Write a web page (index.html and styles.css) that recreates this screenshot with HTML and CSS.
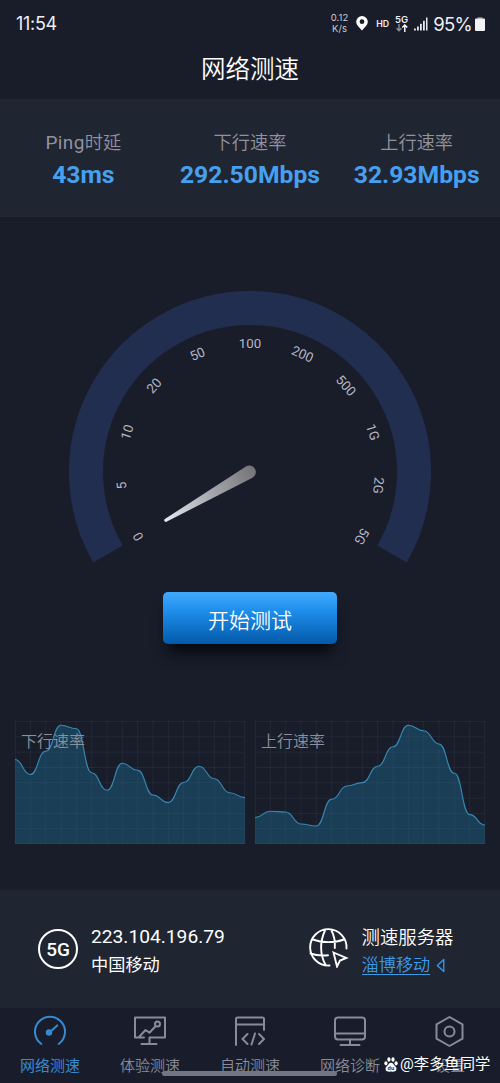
FILE: index.html
```html
<!DOCTYPE html>
<html lang="zh-CN">
<head>
<meta charset="utf-8">
<title>网络测速</title>
<link rel="stylesheet" href="styles.css">
</head>
<body>
<div class="app">
  <div class="statusbar">
    <span class="clock">11:54</span>
    <div class="status-right">
      <span class="rate">0.12<br>K/s</span>
      <svg class="pin" width="12" height="15" viewBox="0 0 12 15"><path fill="#fff" fill-rule="evenodd" d="M6 0a5.8 5.8 0 0 1 5.8 5.8C11.800 9 8.500 11.500 6 14.600 3.500 11.500.2 9 .2 5.800A5.800 5.800 0 0 1 6 0zm0 3.300a2.400 2.400 0 1 0 0 4.800 2.400 2.400 0 0 0 0-4.800z"/></svg>
      <span class="hd">HD</span>
      <span class="net"><span>5G</span><svg width="12" height="8" viewBox="0 0 12 8" fill="none" stroke-width="1.400"><path stroke="#8b8e98" d="M3 0v6.500M.6 4.200 3 6.800l2.400-2.600"/><path stroke="#fff" d="M8.800 8V1.200M6.300 3.600l2.500-2.600 2.500 2.600"/></svg></span>
      <svg class="signal" width="14" height="14" viewBox="0 0 14 14" fill="#e8e9ee"><rect x="0" y="11.500" width="1.800" height="2"/><rect x="3" y="9.500" width="1.800" height="4"/><rect x="6" y="6.800" width="1.800" height="6.700"/><rect x="9" y="3.800" width="1.800" height="9.700"/><rect x="12" y="0.500" width="1.500" height="13"/></svg>
      <span class="percent">95%</span>
      <svg class="battery" width="10" height="14" viewBox="0 0 10 14"><rect x="2.500" y="0" width="5" height="2" fill="#777b86"/><rect x="0" y="1.500" width="10" height="12.500" rx="1" fill="#f1f2f5"/></svg>
    </div>
  </div>
  <header class="title">网络测速</header>
  <section class="stats">
    <div class="stat"><span class="stat-label"><span class="latin">Ping</span>时延</span><span class="stat-value">43ms</span></div>
    <div class="stat"><span class="stat-label">下行速率</span><span class="stat-value">292.50Mbps</span></div>
    <div class="stat"><span class="stat-label">上行速率</span><span class="stat-value">32.93Mbps</span></div>
  </section>
  <section class="dial">
    <svg class="gauge" width="364" height="280" viewBox="-182 -182 364 280">
      <defs><linearGradient id="needle" x1="0" y1="0" x2="0" y2="1"><stop offset="0" stop-color="#e6e8f2"/><stop offset=".5" stop-color="#a8a9af"/><stop offset="1" stop-color="#747477"/></linearGradient></defs>
      <path class="arc" d="M-142.030 82A164 164 0 1 1 142.030 82"/>
      <g class="ticks">
        <text transform="rotate(-120) translate(0 -124.500)">0</text>
        <text transform="rotate(-96) translate(0 -124.500)">5</text>
        <text transform="rotate(-72) translate(0 -124.500)">10</text>
        <text transform="rotate(-48) translate(0 -124.500)">20</text>
        <text transform="rotate(-24) translate(0 -124.500)">50</text>
        <text transform="translate(0 -124.500)">100</text>
        <text transform="rotate(24) translate(0 -124.500)">200</text>
        <text transform="rotate(48) translate(0 -124.500)">500</text>
        <text transform="rotate(72) translate(0 -124.500)">1G</text>
        <text transform="rotate(96) translate(0 -124.500)">2G</text>
        <text transform="rotate(120) translate(0 -124.500)">5G</text>
      </g>
      <path transform="translate(.5 -.6) rotate(-120)" fill="url(#needle)" d="M-1.500-98.500Q0-100 1.500-98.500L6.600-1.500A6.600 6.600 0 1 1-6.600-1.500z"/>
    </svg>
    <button class="start">开始测试</button>
  </section>
  <section class="charts">
    <div class="chart">
      <svg width="230" height="123" viewBox="0 0 240 123" preserveAspectRatio="none">
        <path class="area" d="M0 38.500C8 38.500 8 53.500 16 53.500S24 30.300 32 30.300 40 4.300 48 4.300 56 7.700 64 7.700 72 51.700 80 51.700 88 69.300 96 69.300 104 42.300 112 42.300 120 49.300 128 49.300 136 74 144 74 152 81.600 160 81.600 168 61.500 176 61.500 184 45.300 192 45.300 200 57.700 208 57.700 216 71.700 224 71.700 232 76.600 240 76.600V123H0z"/>
        <path class="line" d="M0 38.500C8 38.500 8 53.500 16 53.500S24 30.300 32 30.300 40 4.300 48 4.300 56 7.700 64 7.700 72 51.700 80 51.700 88 69.300 96 69.300 104 42.300 112 42.300 120 49.300 128 49.300 136 74 144 74 152 81.600 160 81.600 168 61.500 176 61.500 184 45.300 192 45.300 200 57.700 208 57.700 216 71.700 224 71.700 232 76.600 240 76.600"/>
        <path class="grid" d="M0 .5H240M0 15.800H240M0 31.200H240M0 46.500H240M0 61.800H240M0 77.200H240M0 92.500H240M0 107.800H240M0 122.500H240M.5 0V123M16 0V123M32 0V123M48 0V123M64 0V123M80 0V123M96 0V123M112 0V123M128 0V123M144 0V123M160 0V123M176 0V123M192 0V123M208 0V123M224 0V123M239.500 0V123"/>
      </svg>
      <span class="chart-label">下行速率</span>
    </div>
    <div class="chart">
      <svg width="230" height="123" viewBox="0 0 240 123" preserveAspectRatio="none">
        <path class="area" d="M0 96.600C8 96.600 8 90.300 16 90.300S24 91 32 91 40 103 48 103 56 105 64 105 72 78.300 80 78.300 88 65 96 65 104 61.600 112 61.600 120 45.300 128 45.300 136 25.700 144 25.700 152 4.300 160 4.300 168 9.700 176 9.700 184 23 192 23 200 52.300 208 52.300 216 93.600 224 93.600 232 104 240 104V123H0z"/>
        <path class="line" d="M0 96.600C8 96.600 8 90.300 16 90.300S24 91 32 91 40 103 48 103 56 105 64 105 72 78.300 80 78.300 88 65 96 65 104 61.600 112 61.600 120 45.300 128 45.300 136 25.700 144 25.700 152 4.300 160 4.300 168 9.700 176 9.700 184 23 192 23 200 52.300 208 52.300 216 93.600 224 93.600 232 104 240 104"/>
        <path class="grid" d="M0 .5H240M0 15.800H240M0 31.200H240M0 46.500H240M0 61.800H240M0 77.200H240M0 92.500H240M0 107.800H240M0 122.500H240M.5 0V123M16 0V123M32 0V123M48 0V123M64 0V123M80 0V123M96 0V123M112 0V123M128 0V123M144 0V123M160 0V123M176 0V123M192 0V123M208 0V123M224 0V123M239.500 0V123"/>
      </svg>
      <span class="chart-label">上行速率</span>
    </div>
  </section>
  <section class="info">
    <div class="info-item">
      <span class="badge">5G</span>
      <div class="info-text"><span class="ip">223.104.196.79</span><span class="carrier">中国移动</span></div>
    </div>
    <div class="info-item">
      <svg class="globe" width="40" height="40" viewBox="0 0 40 40" fill="none" stroke="#fff" stroke-width="1.900" stroke-linecap="round" stroke-linejoin="round"><path d="M37.500 20.500A18.200 18.200 0 1 0 20.500 37.500M3.800 11.500C13 15 26 15 34.800 11.500M1.500 25.500C7 27.500 13 27.800 19 27.300M16 2.500C10.500 14 11 27 16.500 36.800M22.500 2.500C25.300 8 26.300 14 25.800 20"/><path d="m24.500 24.500 12.800 5.500-6.300 2.500-3 6z" stroke-linejoin="miter"/></svg>
      <div class="info-text"><span class="server">测速服务器</span><span class="choice"><u>淄博移动</u><svg width="9" height="15" viewBox="0 0 9 15" fill="none" stroke="#3c99e8" stroke-width="1.300" stroke-linejoin="round"><path d="M7.800 1.500v12L1.300 7.500z"/></svg></span></div>
    </div>
  </section>
  <nav class="tabs">
    <div class="tab active"><svg viewBox="0 0 34 32"><path d="M8.300 29A15 15 0 1 1 25.700 29"/><path d="m17 17 7.200-6.600"/><circle cx="16" cy="17.500" r="2.200" fill="currentColor"/></svg><span>网络测速</span></div>
    <div class="tab"><svg viewBox="0 0 34 32"><path d="M11 22.500H2V2.500h30v20H16.500V28M8.500 29h15M6.500 21.500 12.500 15l4 2.700 6-6.500"/><circle cx="24.500" cy="9" r="2.500"/></svg><span>体验测速</span></div>
    <div class="tab"><svg viewBox="0 0 34 32"><path d="M3 30V4q0-1.500 1.500-1.500h25Q31 2.500 31 4v11M3 9.500h28M14.500 19 9.500 24l5 5M26 19l5 5-5 5M22 18.500l-3.500 11"/></svg><span>自动测速</span></div>
    <div class="tab"><svg viewBox="0 0 34 32"><rect x="2" y="2.500" width="30" height="22" rx="3"/><path d="M2 18.500h30M17 24.500V30M7.500 30h19"/></svg><span>网络诊断</span></div>
    <div class="tab"><svg viewBox="0 0 34 32"><path d="m16.500 2 13 7.300v14.400L16.500 31l-13-7.300V9.300z"/><circle cx="16.500" cy="16.500" r="5"/></svg><span>设置</span></div>
    <i class="home-bar"></i>
    <div class="watermark"><svg width="14" height="15" viewBox="0 0 14 15" fill="#fff"><ellipse cx="1.900" cy="6.300" rx="1.600" ry="2.100"/><ellipse cx="4.900" cy="2.500" rx="1.600" ry="2.200"/><ellipse cx="9" cy="2.500" rx="1.600" ry="2.200"/><ellipse cx="12.100" cy="6.300" rx="1.600" ry="2.100"/><path d="M7 5.800c2 0 2.300 1.700 3.700 3 1.500 1.300 2 2.300 1.600 3.900-.5 1.700-2 2.100-5.300 1.900-3.300.2-4.800-.2-5.300-1.900-.4-1.600.1-2.600 1.600-3.900 1.400-1.300 1.700-3 3.700-3z"/><text x="3.500" y="13" class="paw-text">du</text></svg><span>@李多鱼同学</span></div>
  </nav>
</div>
</body>
</html>
```
FILE: styles.css
```css
* { box-sizing: border-box; }
body {
  margin: 0;
  background: #191d2a;
  color: #fff;
  font-family: Roboto, "Noto Sans CJK SC", sans-serif;
}
.app {
  width: 500px;
  height: 1083px;
  display: flex;
  flex-direction: column;
  overflow: hidden;
}
.statusbar {
  height: 46px;
  flex: none;
  display: flex;
  justify-content: space-between;
  align-items: center;
  padding: 1px 15px 0 16px;
  color: #eceef5;
  font-family: Inter, sans-serif;
}
.clock { font-size: 18px; letter-spacing: -.3px; }
.status-right { display: flex; align-items: center; }
.rate { font-size: 9.500px; line-height: 10.500px; text-align: center; color: #c9ccd6; }
.pin { margin-left: 8px; margin-right: 8px; }
.hd { font-size: 8.800px; font-weight: 600; margin-right: 6px; }
.net { display: flex; flex-direction: column; align-items: center; font-size: 9.500px; font-weight: 600; line-height: 9px; margin-right: 6px; }
.signal { margin-right: 5px; }
.percent { font-size: 18.500px; letter-spacing: -.7px; margin-right: 3px; }
.title {
  height: 52.500px;
  flex: none;
  text-align: center;
  font-size: 24.500px;
  font-weight: 350;
  line-height: 48px;
}
.stats {
  height: 118.500px;
  flex: none;
  display: grid;
  grid-template-columns: repeat(3, 1fr);
  background: #202532;
  padding-top: 30.500px;
}
.stat { display: flex; flex-direction: column; align-items: center; }
.stat-label { font-size: 18.200px; line-height: 28px; color: #9193a0; font-weight: 350; }
.latin { font-size: 19px; font-weight: 400; letter-spacing: .4px; }
.stat-value { font-size: 24.700px; line-height: 35px; font-weight: 700; color: #46a0f0; }
.dial {
  height: 504px;
  flex: none;
  display: flex;
  flex-direction: column;
  align-items: center;
  padding-top: 73px;
}
.arc { fill: none; stroke: #222e50; stroke-width: 34; }
.ticks text { font-size: 13.300px; fill: #b4b6c4; text-anchor: middle; }
.start {
  width: 174px;
  height: 52px;
  margin-top: 22px;
  border: 0;
  border-radius: 5px;
  padding: 6px 0 0;
  color: #fff;
  font: 350 21px/46px Roboto, "Noto Sans CJK SC", sans-serif;
  background: linear-gradient(#42aafd, #1f8fec 35%, #0359a8);
  box-shadow: 0 13px 15px -5px #05070b;
}
.charts { height: 169px; flex: none; display: flex; gap: 10px; padding: 0 15px; }
.chart { display: grid; height: 123px; }
.chart > * { grid-area: 1 / 1; }
.area { fill: #193e55; }
.line { fill: none; stroke: #3689b6; stroke-width: 1.100; vector-effect: non-scaling-stroke; }
.grid { fill: none; stroke: #7793b3; stroke-opacity: .09; vector-effect: non-scaling-stroke; }
.chart-label { padding: 8px 6px 0; font-size: 16px; line-height: 26px; font-weight: 350; color: #8c909e; }
.info {
  height: 118px;
  flex: none;
  display: flex;
  justify-content: space-between;
  background: #202532;
  padding: 33px 46.500px 0 38px;
}
.info-item { display: flex; gap: 13px; }
.badge {
  width: 40px;
  height: 40px;
  margin-top: 6px;
  border: 2px solid #fff;
  border-radius: 50%;
  text-align: center;
  font: 500 19px/37px Roboto, sans-serif;
}
.globe { margin-top: 5px; }
.info-text { display: flex; flex-direction: column; }
.ip { font-size: 19.200px; line-height: 28px; }
.server { font-size: 18.400px; line-height: 30px; font-weight: 350; }
.carrier, .choice { font-size: 17.200px; line-height: 28px; }
.choice { display: flex; align-items: center; gap: 6px; color: #3c99e8; font-weight: 350; padding-top: 3px; }
.choice u { text-decoration: none; border-bottom: 1px solid #3c99e8; line-height: 19px; height: 19px; }
.tabs {
  height: 75px;
  flex: none;
  position: relative;
  display: grid;
  grid-template-columns: repeat(5, 1fr);
  background: #191d2b;
}
.tab { display: flex; flex-direction: column; align-items: center; padding-top: 7px; color: #888b99; font-size: 15px; line-height: 22px; font-weight: 350; }
.tab svg { width: 34px; height: 32px; margin-bottom: 8px; fill: none; stroke: currentColor; stroke-width: 2; stroke-linecap: round; stroke-linejoin: round; }
.tab.active { color: #3789d0; font-weight: 400; }
.home-bar { position: absolute; left: 162px; top: 63px; width: 175px; height: 5px; border-radius: 3px; background: #747783; }
.watermark { position: absolute; left: 384px; top: 45px; display: flex; align-items: center; gap: 2px; font-size: 15.300px; line-height: 22px; }
.paw-text { font: 700 6px Roboto, sans-serif; fill: #343744; }
```
